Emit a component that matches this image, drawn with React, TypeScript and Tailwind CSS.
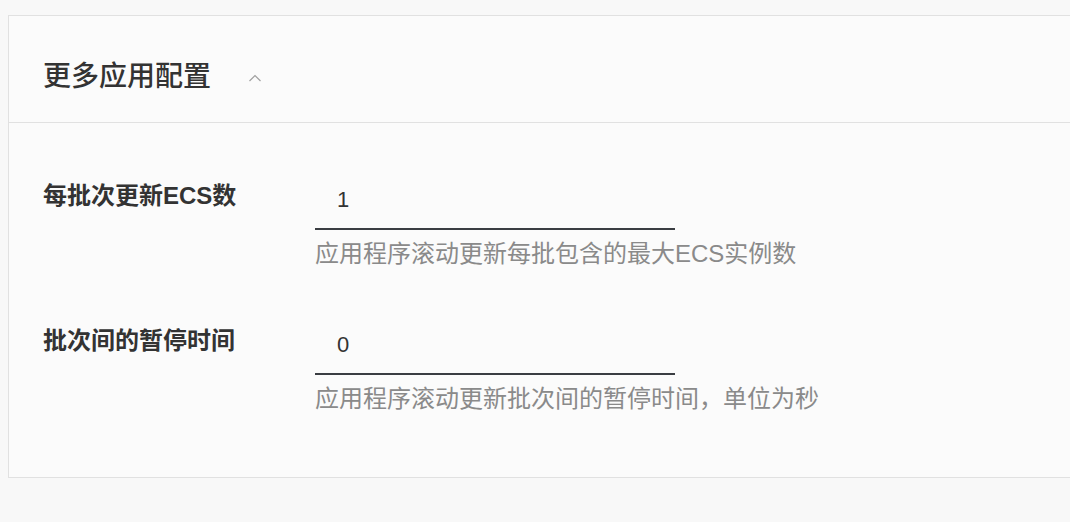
import React from "react";

const font = { fontFamily: '"Liberation Sans", "Noto Sans CJK SC", sans-serif' };

function Row({ label, value, help }: { label: string; value: string; help: string }) {
  return (
    <div className="flex">
      <div className="w-[272px] shrink-0 pt-[10px] text-[24px] leading-[32px] font-bold text-[#333333]">{label}</div>
      <div className="flex flex-col">
        <div className="w-[360px] h-[60px] border-b-2 border-[#3a3d42] flex items-center pl-[22px] text-[22px] text-[#333333]">
          {value}
        </div>
        <div className="mt-[8px] text-[24px] leading-[32px] text-[#8a8a8a]">{help}</div>
      </div>
    </div>
  );
}

export default function App() {
  return (
    <div className="w-[1070px] h-[522px] overflow-hidden bg-[#f8f8f8] pt-[15px] pl-[8px]" style={font}>
      <div className="w-[1100px] border border-[#e1e1e1] bg-[#fbfbfb]">
        <div className="h-[107px] flex items-center pt-[16px] pl-[34px] border-b border-[#e1e1e1]">
          <span className="text-[28px] leading-[40px] font-medium text-[#333333]">更多应用配置</span>
          <svg className="ml-[37px] mt-[2px]" width="14" height="8" viewBox="0 0 14 8" fill="none">
            <path d="M1.5 7 L7 1.5 L12.5 7" stroke="#a0a0a0" strokeWidth="1.2" />
          </svg>
        </div>
        <div className="pl-[34px] pt-[47px] pb-[62px] flex flex-col gap-[45px]">
          <Row label="每批次更新ECS数" value="1" help="应用程序滚动更新每批包含的最大ECS实例数" />
          <Row label="批次间的暂停时间" value="0" help="应用程序滚动更新批次间的暂停时间，单位为秒" />
        </div>
      </div>
    </div>
  );
}
